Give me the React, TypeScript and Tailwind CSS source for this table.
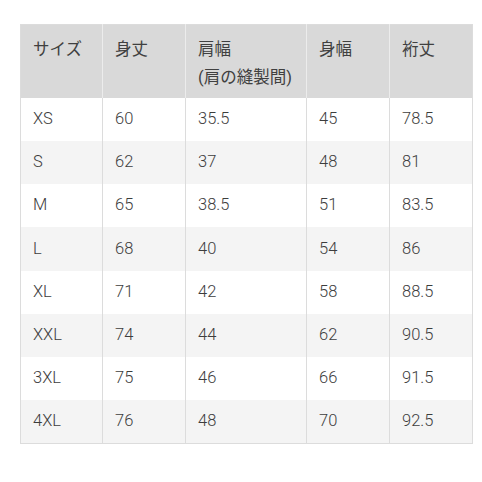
const headers = ["サイズ", "身丈", "肩幅\n(肩の縫製間)", "身幅", "裄丈"];

const rows = [
  ["XS", "60", "35.5", "45", "78.5"],
  ["S", "62", "37", "48", "81"],
  ["M", "65", "38.5", "51", "83.5"],
  ["L", "68", "40", "54", "86"],
  ["XL", "71", "42", "58", "88.5"],
  ["XXL", "74", "44", "62", "90.5"],
  ["3XL", "75", "46", "66", "91.5"],
  ["4XL", "76", "48", "70", "92.5"],
];

const widths = ["w-[82px]", "w-[83px]", "w-[121px]", "w-[83px]", "w-[83px]"];

export default function App() {
  return (
    <div
      className="min-h-screen bg-white pt-[24px] pl-[20px] text-[#3d3d3d]"
      style={{ fontFamily: '"Roboto", "Noto Sans CJK JP", sans-serif' }}
    >
      <table className="table-fixed border-collapse border border-[#dcdcdc] text-[16.5px] font-light">
        <thead>
          <tr className="h-[73px] bg-[#d9d9d9]">
            {headers.map((h, i) => (
              <th
                key={i}
                className={`${widths[i]} border-l border-[#ececec] first:border-l-0 pl-3 pt-[11px] align-top text-left font-normal text-[#404040] leading-[28px] whitespace-pre-line`}
              >
                {h}
              </th>
            ))}
          </tr>
        </thead>
        <tbody>
          {rows.map((r, ri) => (
            <tr key={ri} className={`h-[43.25px] ${ri % 2 === 1 ? "bg-[#f4f4f4]" : "bg-white"}`}>
              {r.map((c, ci) => (
                <td
                  key={ci}
                  className="border-l border-[#dcdcdc] first:border-l-0 pl-3 align-middle leading-none"
                >
                  {c}
                </td>
              ))}
            </tr>
          ))}
        </tbody>
      </table>
    </div>
  );
}
